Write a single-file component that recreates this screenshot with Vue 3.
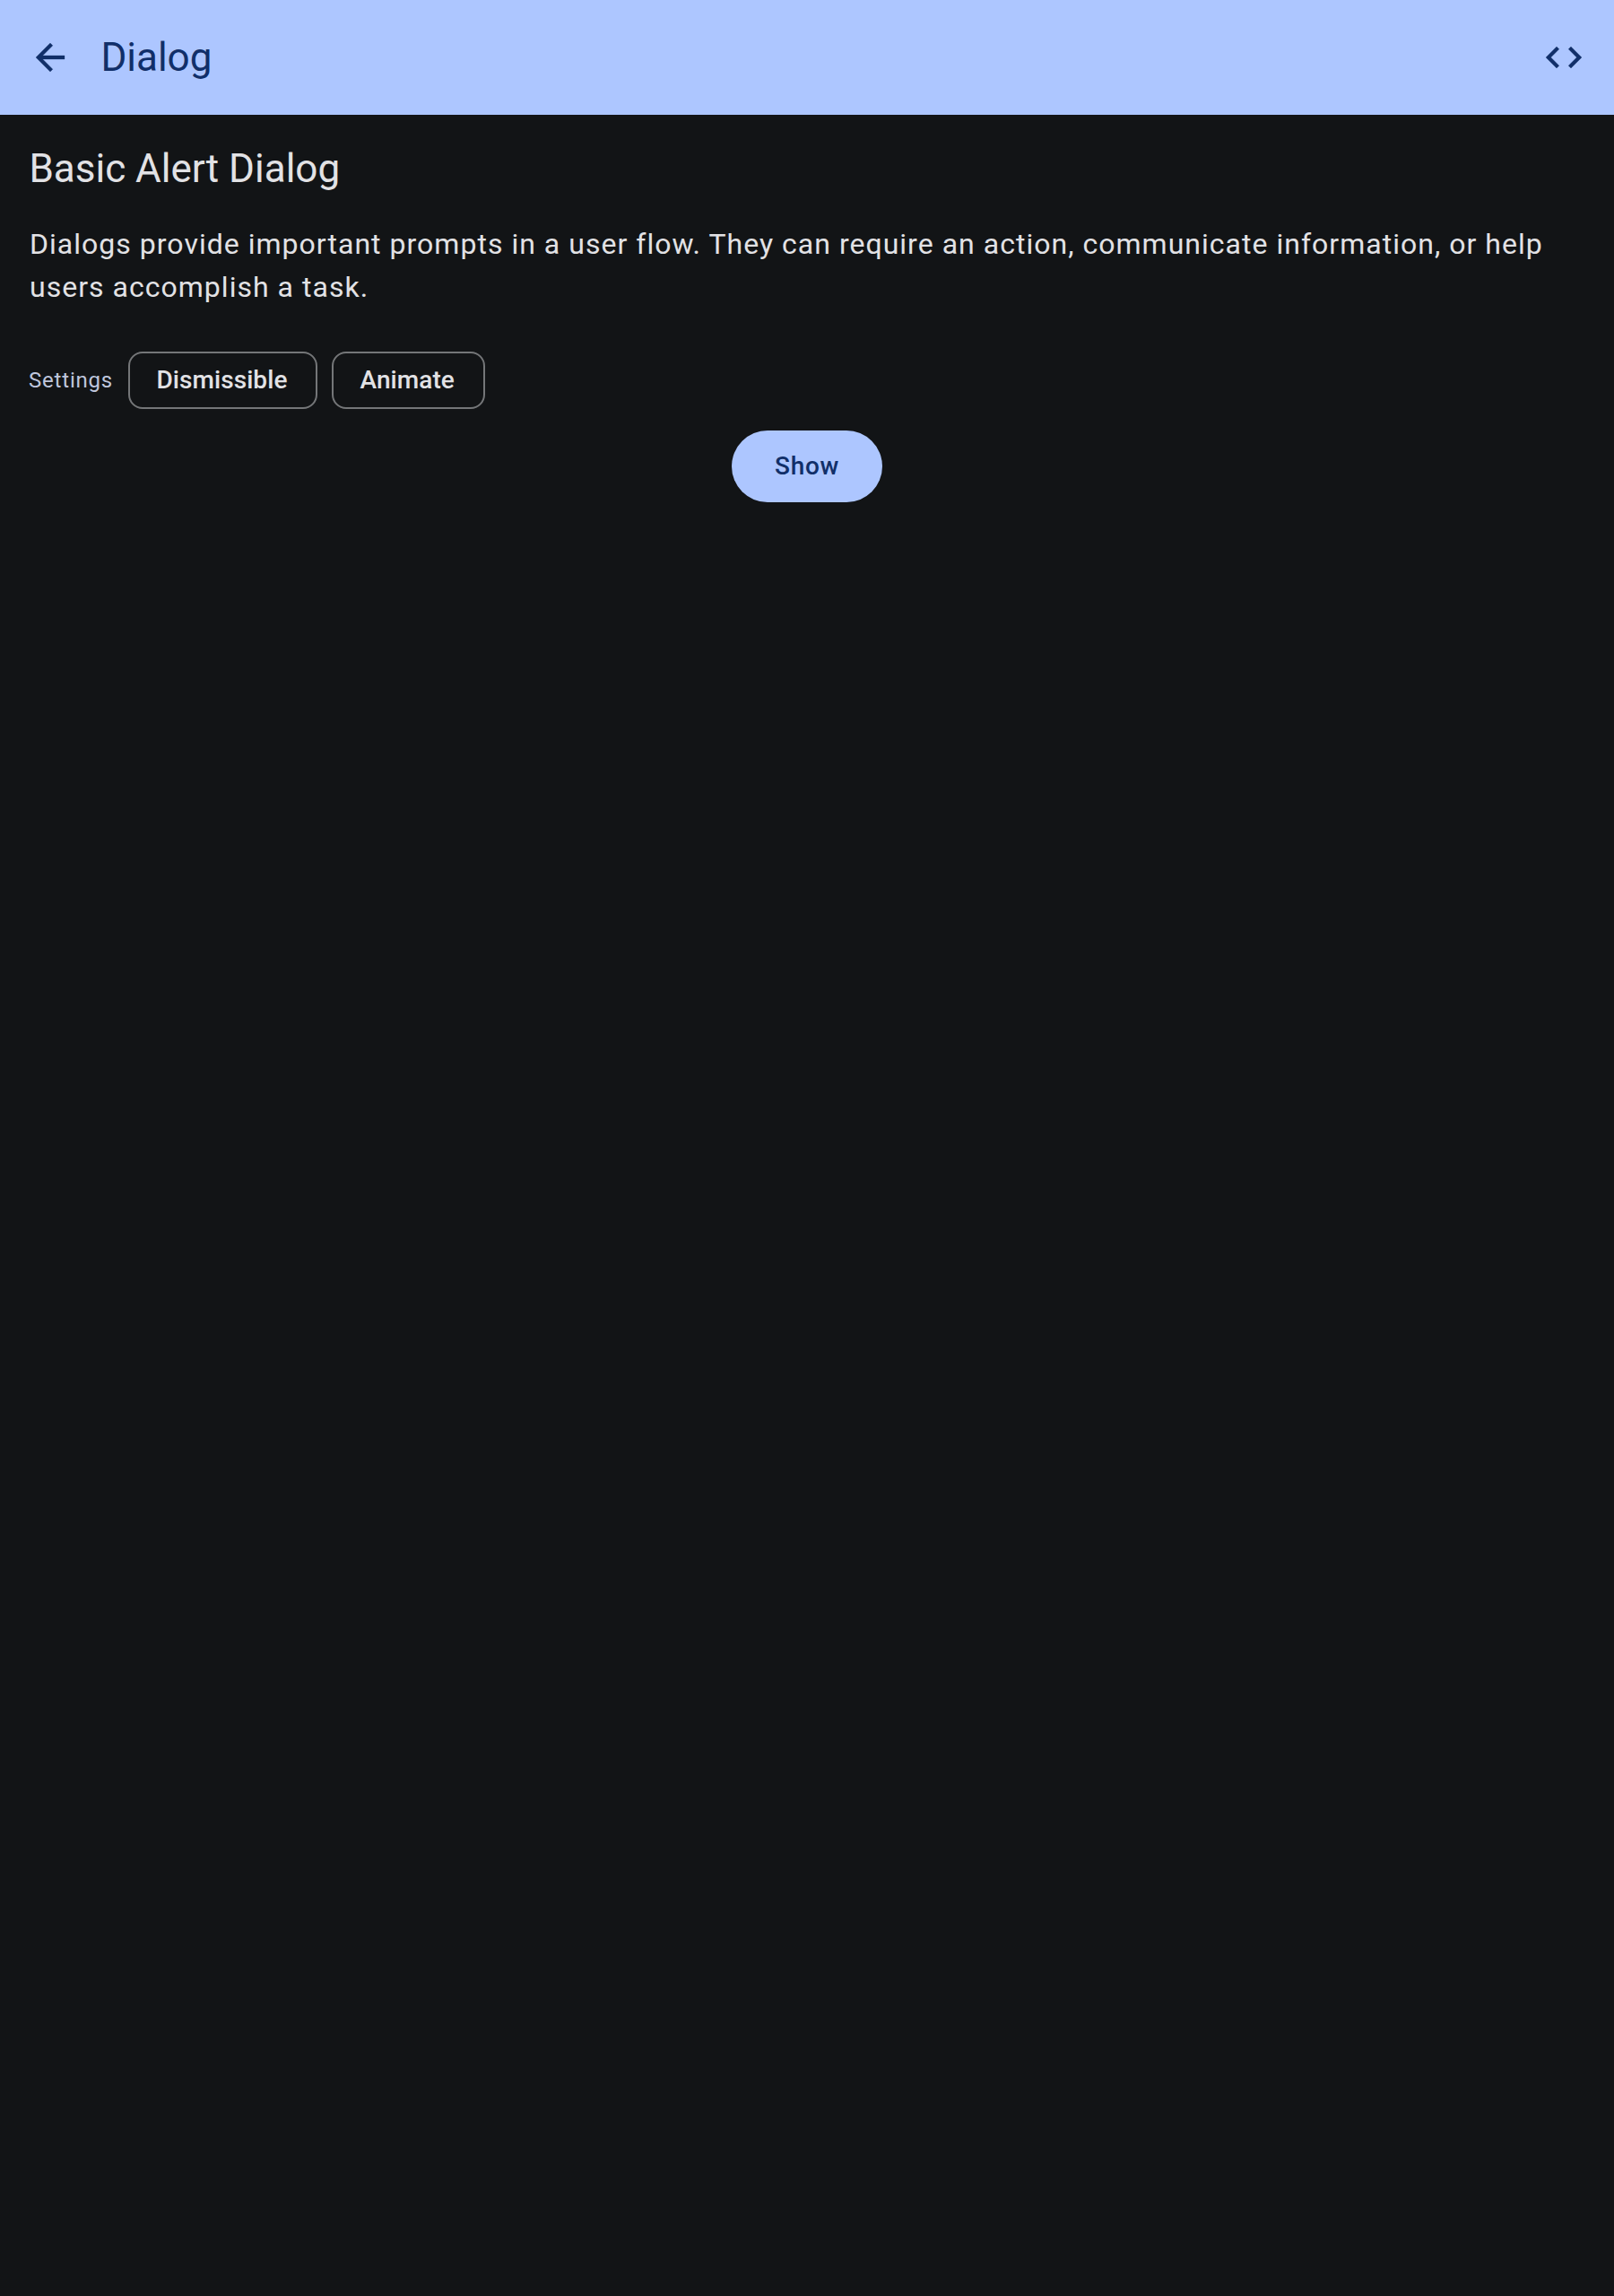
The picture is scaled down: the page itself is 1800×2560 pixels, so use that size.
<script setup>
const settings = [
  { name: 'Dismissible', width: 211 },
  { name: 'Animate', width: 171 },
]
</script>

<template>
  <div class="screen">
    <header class="app-bar">
      <button class="icon-button" aria-label="Back">
        <svg viewBox="0 0 24 24"><path d="M20 11H7.83l5.59-5.59L12 4l-8 8 8 8 1.41-1.41L7.83 13H20v-2z" /></svg>
      </button>
      <h1 class="title">Dialog</h1>
      <button class="icon-button" aria-label="Source code">
        <svg viewBox="0 0 24 24"><path d="M9.4 16.6 4.8 12l4.6-4.6L8 6l-6 6 6 6 1.4-1.4zm5.2 0 4.6-4.6-4.6-4.6L16 6l6 6-6 6-1.4-1.4z" /></svg>
      </button>
    </header>
    <main class="content">
      <h2 class="heading">Basic Alert Dialog</h2>
      <p class="description">
        Dialogs provide important prompts in a user flow. They can require an action, communicate information, or help users accomplish a task.
      </p>
      <div class="settings">
        <span class="label">Settings</span>
        <button v-for="s in settings" :key="s.name" class="chip" :style="{ width: s.width + 'px' }">{{ s.name }}</button>
      </div>
      <button class="show">Show</button>
    </main>
  </div>
</template>

<style>
body {
  background: #121416;
}
</style>

<style scoped>
.screen {
  min-height: 2560px;
  background: #121416;
  color: #e2e2e5;
  font-family: Roboto, sans-serif;
}

button {
  border: 0;
  padding: 0;
  background: none;
  color: inherit;
  font-family: inherit;
}

.app-bar {
  display: flex;
  align-items: center;
  height: 128px;
  padding: 0 8px;
  box-sizing: border-box;
  background: #adc6ff;
  color: #112f69;
}

.icon-button {
  display: flex;
  align-items: center;
  justify-content: center;
  width: 96px;
  height: 96px;
}

.icon-button svg {
  width: 48px;
  height: 48px;
  fill: currentColor;
  stroke: currentColor;
  stroke-width: 0.15;
  stroke-linejoin: round;
}

.title {
  flex: 1;
  margin: 0 0 0 8px;
  padding-left: 0.4px;
  font-size: 44px;
  font-weight: 400;
  line-height: 56px;
}

.content {
  display: flex;
  flex-direction: column;
  padding: 32px;
}

.heading {
  margin: 0;
  padding-left: 0.4px;
  font-size: 44px;
  font-weight: 400;
  line-height: 56px;
}

.description {
  margin: 32px 0 0;
  padding-left: 1px;
  font-size: 32px;
  line-height: 48px;
  letter-spacing: 1.02px;
}

.settings {
  display: flex;
  align-items: center;
  margin-top: 48px;
}

.label {
  width: 95px;
  margin-right: 16px;
  color: #bfc6dc;
  font-size: 24px;
  line-height: 32px;
  letter-spacing: 0.8px;
  white-space: nowrap;
}

.chip {
  height: 64px;
  margin-right: 16px;
  padding-left: 29.5px;
  border: 2px solid #747678;
  border-radius: 16px;
  font-size: 28px;
  font-weight: 500;
  line-height: 40px;
  letter-spacing: 0.07px;
  text-align: left;
}

.show {
  align-self: center;
  width: 168px;
  height: 80px;
  margin-top: 24px;
  border-radius: 40px;
  background: #adc6ff;
  color: #112f69;
  font-size: 28px;
  font-weight: 500;
  line-height: 40px;
  letter-spacing: 0.7px;
}
</style>
